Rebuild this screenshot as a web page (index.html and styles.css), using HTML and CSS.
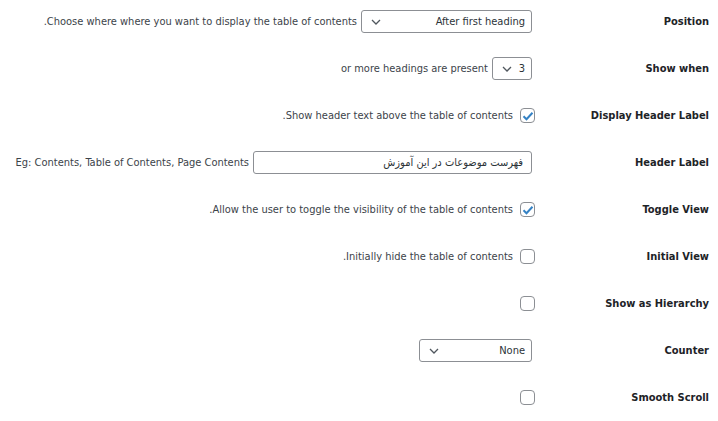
FILE: index.html
```html
<!DOCTYPE html>
<html lang="en" dir="rtl">
<head>
    <meta charset="UTF-8">
    <meta name="viewport" content="width=device-width, initial-scale=1.0">
    <title>Table of Contents Settings</title>
    <link rel="stylesheet" href="styles.css">
</head>
<body>
    <div class="settings">
        <div class="row">
            <div class="label">Position</div>
            <div class="field">
                <span class="select w-position"><span>After first heading</span><svg class="chev" width="10" height="6" viewBox="0 0 10 6"><path d="M1 1l4 4 4-4" fill="none" stroke="#50575e" stroke-width="1.3"/></svg></span>
                <span class="desc" dir="ltr">.Choose where where you want to display the table of contents</span>
            </div>
        </div>

        <div class="row">
            <div class="label">Show when</div>
            <div class="field">
                <span class="select w-count"><span>3</span><svg class="chev" width="10" height="6" viewBox="0 0 10 6"><path d="M1 1l4 4 4-4" fill="none" stroke="#50575e" stroke-width="1.3"/></svg></span>
                <span class="desc" dir="ltr">or more headings are present</span>
            </div>
        </div>

        <div class="row">
            <div class="label">Display Header Label</div>
            <div class="field">
                <span class="check checked"><svg width="12" height="10" viewBox="0 0 12 10"><path d="M1.5 5.2l3 3 6-6.5" fill="none" stroke="#3582c4" stroke-width="2"/></svg></span>
                <span class="desc" dir="ltr">.Show header text above the table of contents</span>
            </div>
        </div>

        <div class="row">
            <div class="label">Header Label</div>
            <div class="field">
                <span class="text-input">فهرست موضوعات در این آموزش</span>
                <span class="desc" dir="ltr">Eg: Contents, Table of Contents, Page Contents</span>
            </div>
        </div>

        <div class="row">
            <div class="label">Toggle View</div>
            <div class="field">
                <span class="check checked"><svg width="12" height="10" viewBox="0 0 12 10"><path d="M1.5 5.2l3 3 6-6.5" fill="none" stroke="#3582c4" stroke-width="2"/></svg></span>
                <span class="desc" dir="ltr">.Allow the user to toggle the visibility of the table of contents</span>
            </div>
        </div>

        <div class="row">
            <div class="label">Initial View</div>
            <div class="field">
                <span class="check"></span>
                <span class="desc" dir="ltr">.Initially hide the table of contents</span>
            </div>
        </div>

        <div class="row">
            <div class="label">Show as Hierarchy</div>
            <div class="field">
                <span class="check"></span>
            </div>
        </div>

        <div class="row">
            <div class="label">Counter</div>
            <div class="field">
                <span class="select w-counter"><span>None</span><svg class="chev" width="10" height="6" viewBox="0 0 10 6"><path d="M1 1l4 4 4-4" fill="none" stroke="#50575e" stroke-width="1.3"/></svg></span>
            </div>
        </div>

        <div class="row">
            <div class="label">Smooth Scroll</div>
            <div class="field">
                <span class="check"></span>
            </div>
        </div>
    </div>
</body>
</html>
```

FILE: styles.css
```css
body {
    margin: 0;
    background-color: #fff;
    color: #3c434a;
    font-family: "DejaVu Sans Condensed", "DejaVu Sans", sans-serif;
    font-size: 11px;
}

.settings {
    margin-top: -2px;
}

.row {
    display: grid;
    grid-template-columns: 186px 1fr;
    align-items: center;
    height: 47px;
}

.label {
    padding-right: 9px;
    font-weight: bold;
    color: #1d2327;
}

.field {
    display: flex;
    align-items: center;
    gap: 4px;
}

.desc {
    white-space: nowrap;
}

.select {
    display: flex;
    align-items: center;
    justify-content: space-between;
    box-sizing: border-box;
    height: 23px;
    padding: 0 6px 0 9px;
    border: 1px solid #8c8f94;
    border-radius: 3px;
    color: #2c3338;
}

.w-position {
    width: 171px;
}

.w-count {
    width: 40px;
}

.w-counter {
    width: 113px;
}

.text-input {
    display: flex;
    align-items: center;
    box-sizing: border-box;
    width: 279px;
    height: 23px;
    padding: 0 8px;
    border: 1px solid #8c8f94;
    border-radius: 3px;
    color: #2c3338;
}

.check {
    display: flex;
    align-items: center;
    justify-content: center;
    box-sizing: border-box;
    width: 15px;
    height: 15px;
    margin-right: -3px;
    margin-left: 3px;
    border: 1px solid #8c8f94;
    border-radius: 4px;
}
```
